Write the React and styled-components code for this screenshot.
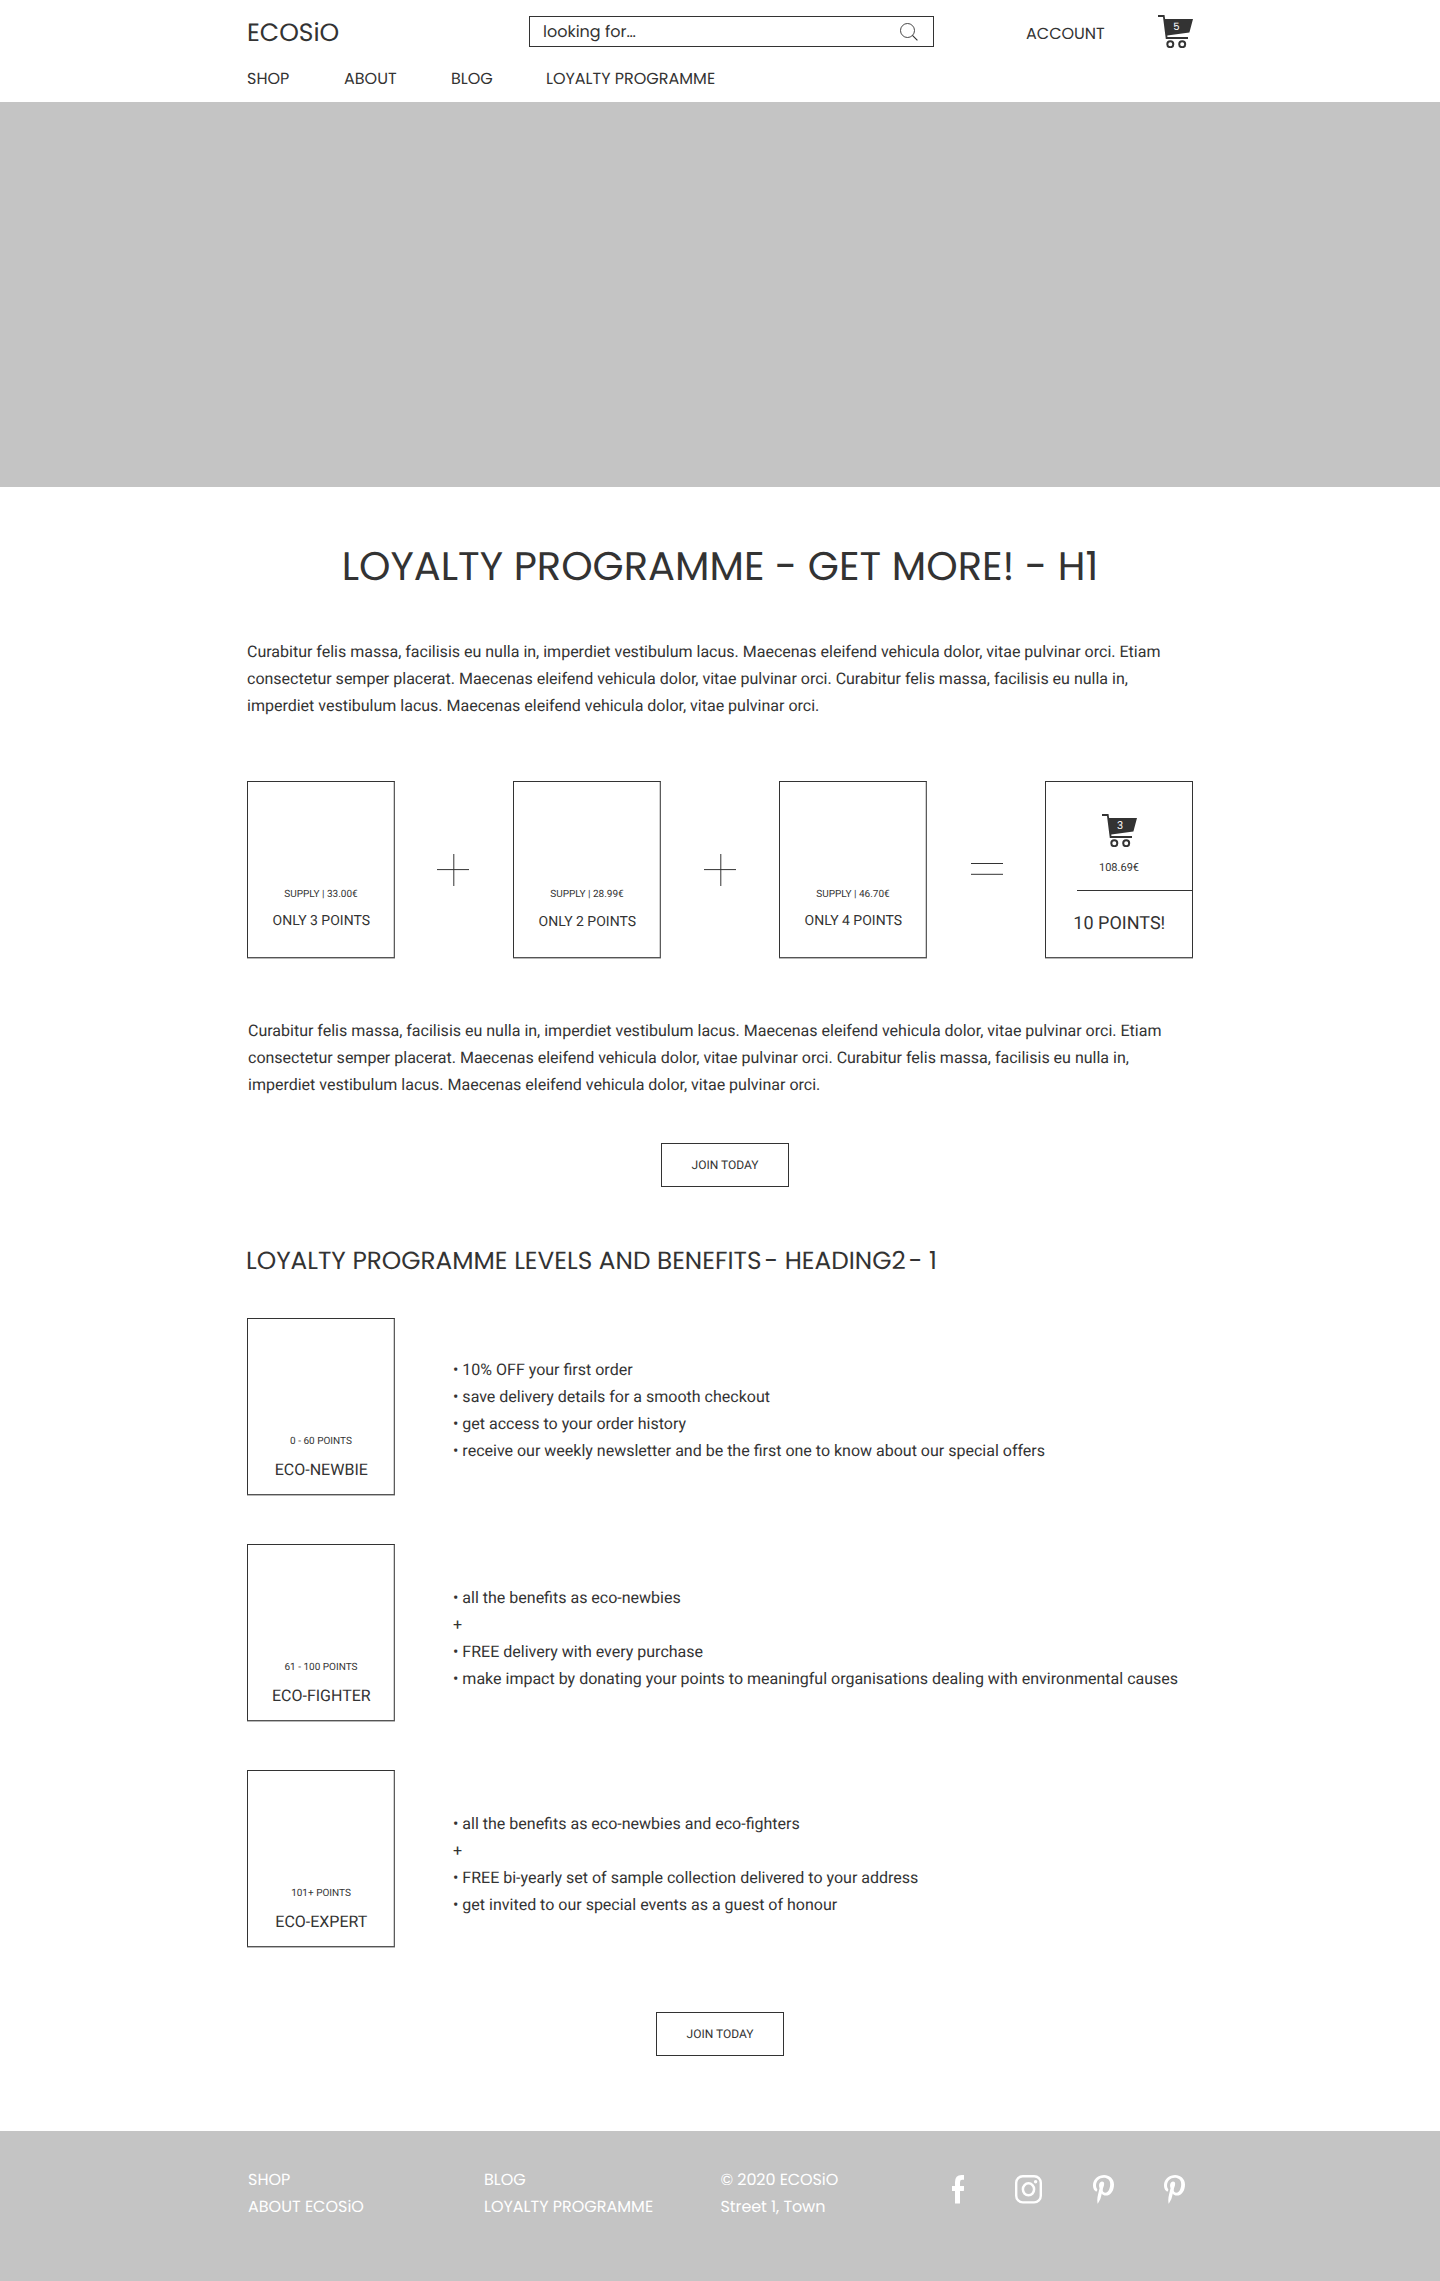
import React from "react";
import styled, { createGlobalStyle } from "styled-components";
import { FaPinterestP } from "react-icons/fa";

const ink = "#333333";
const grey = "#c4c4c4";
const display = `Poppins, Inter, "Liberation Sans", sans-serif`;
const body = `Roboto, "Liberation Sans", sans-serif`;

const GlobalStyle = createGlobalStyle`
  *, *::before, *::after { box-sizing: border-box; }
  body {
    margin: 0;
    background: #fff;
    color: ${ink};
    font-family: ${body};
    text-rendering: geometricPrecision;
  }
  h1, h2, p, ul { margin: 0; padding: 0; font-weight: 400; }
  ul { list-style: none; }
  a { color: inherit; text-decoration: none; }
  svg { display: block; flex: none; }
`;

const Page = styled.div`
  display: flex;
  flex-direction: column;
  width: 1440px;
  height: 2281px;
`;

const Container = styled.div`
  width: 946px;
  margin: 0 auto;
`;

/* Header */
const Header = styled.header`
  height: 102px;
  padding-top: 15px;
`;

const TopRow = styled.div`
  display: flex;
  align-items: flex-start;
  height: 33px;
`;

const Logo = styled.a`
  width: 282px;
  padding-top: 1px;
  font: 400 25px/33px ${display};
`;

const SearchBox = styled.div`
  display: flex;
  align-items: flex-start;
  justify-content: space-between;
  width: 405px;
  height: 31px;
  margin-top: 1px;
  padding: 0 15px 0 13px;
  border: 1px solid ${ink};
  font: 400 16px/29px ${display};

  svg { margin-top: 6px; }
`;

const AccountLink = styled.a`
  width: 132px;
  margin: 3px 0 0 92px;
  font: 400 16px/31px ${display};
`;

const Nav = styled.nav`
  display: grid;
  grid-template-columns: 97px 107px 95px auto;
  margin-top: 21px;
  font: 400 16px/20px ${display};
`;

const CartFrame = styled.span`
  position: relative;
  display: block;
  width: 35px;
  height: 33px;
`;

const CartCount = styled.span`
  position: absolute;
  top: 4px;
  left: 11px;
  width: 15px;
  text-align: center;
  color: #fff;
  font: 400 ${(p) => (p.$display ? 10 : 11)}px/15px ${(p) => (p.$display ? display : body)};
`;

const Hero = styled.div`
  height: 385px;
  background: ${grey};
`;

/* Content */
const Main = styled.main`
  flex: 1;
  padding-top: 54px;
`;

const PageTitle = styled.h1`
  text-align: center;
  font: 400 40px/50px ${display};
  white-space: nowrap;
`;

const SectionTitle = styled.h2`
  margin: 59px 0 43px -1px;
  font: 400 24.75px/29px ${display};
  white-space: nowrap;
`;

const TitleDash = styled.span`
  word-spacing: -3.6px;
`;

const Paragraph = styled.p`
  margin: ${(p) => p.$top}px 0 0 ${(p) => p.$left}px;
  font-size: 16px;
  line-height: 27px;
`;

const Equation = styled.div`
  display: flex;
  align-items: flex-start;
  margin: 62px 0 58px;
  height: 178px;
`;

const Card = styled.div`
  display: flex;
  flex: none;
  flex-direction: column;
  align-items: center;
  width: 148px;
  height: 177px;
  margin-bottom: 1px;
  padding-top: ${(p) => p.$top}px;
  border: 1px solid ${ink};
  border-bottom-color: #555;
  border-right-color: ${(p) => (p.$crisp ? ink : "#5c5c5c")};
  box-shadow: 0 1px 0 #b8b8b8${(p) => (p.$crisp ? "" : ", inset -1px 0 0 #d0d0d0")};
  white-space: nowrap;
`;

const CardNote = styled.span`
  font-size: ${(p) => p.$size || 10}px;
  line-height: 16px;
  margin-top: ${(p) => p.$gap || 0}px;
`;

const CardLabel = styled.span`
  margin-top: ${(p) => p.$gap}px;
  padding-left: 0.6px;
  font-size: ${(p) => p.$size}px;
  line-height: ${(p) => p.$line || 20}px;
`;

const CardRule = styled.span`
  align-self: flex-end;
  width: 115px;
  height: 1px;
  margin-top: 14px;
  background: ${ink};
`;

const Operator = styled.div`
  width: 118px;
  padding: 73px 0 0 ${(p) => p.$left}px;
`;

const JoinButton = styled.a`
  display: flex;
  align-items: center;
  justify-content: center;
  width: 128px;
  height: 44px;
  margin: ${(p) => p.$top}px 0 0 ${(p) => p.$left}px;
  border: 1px solid ${ink};
  font-size: 12px;
  line-height: 18px;
`;

const Levels = styled.div`
  display: flex;
  flex-direction: column;
  gap: 48px;
`;

const Level = styled.section`
  display: flex;
  align-items: flex-start;
  gap: 58px;
  height: 178px;
`;

const Benefits = styled.ul`
  margin-top: ${(p) => p.$top}px;
  font-size: 16px;
  line-height: 27px;
  white-space: nowrap;
`;

/* Footer */
const Footer = styled.footer`
  height: 150px;
  padding-top: 35px;
  background: ${grey};
  color: #fff;
`;

const FooterGrid = styled.div`
  display: grid;
  grid-template-columns: 236px 236.5px 231.5px auto;
  width: 946px;
  margin: 0 auto;
  padding-left: 1px;
`;

const FooterColumn = styled.div`
  display: flex;
  flex-direction: column;
  font: 400 16px/27px ${display};
  letter-spacing: ${(p) => p.$tracking || 0}px;
`;

const Social = styled.div`
  display: flex;
  gap: 50.6px;
  padding-top: 9px;
`;

const PinterestIcon = styled(FaPinterestP)`
  width: 21px;
  height: 28.5px;
`;

function Cart({ count, display: useDisplay }) {
  return (
    <CartFrame>
      <svg width="35" height="33" viewBox="0 0 35 33">
        <path fill={ink} d="M0 0H6.5L7.1 4H35L31.4 17.6L9.3 20.6L9.4 22H30V24H7.8L5 2H0Z" />
        <circle cx="12.3" cy="29.2" r="3" fill="none" stroke={ink} strokeWidth="2" />
        <circle cx="24.2" cy="29.2" r="3" fill="none" stroke={ink} strokeWidth="2" />
      </svg>
      <CartCount $display={useDisplay}>{count}</CartCount>
    </CartFrame>
  );
}

const SearchIcon = () => (
  <svg width="18" height="18" viewBox="0 0 18 18" fill="none" stroke={ink}>
    <circle cx="7.5" cy="7.5" r="7" strokeWidth="0.9" />
    <path d="M12.4 12.4L17.4 17.4" strokeWidth="1.1" />
  </svg>
);

const Plus = () => (
  <svg width="32" height="32" viewBox="0 0 32 32" stroke={ink}>
    <path d="M0 15.6H32M16.8 0V32" />
  </svg>
);

const Equals = () => (
  <svg width="32" height="32" viewBox="0 0 32 32" stroke={ink}>
    <path d="M0 9.5H32M0 20.3H32" />
  </svg>
);

const Facebook = () => (
  <svg width="12.4" height="29" viewBox="0 0 12.4 29" fill="#fff">
    <path d="M12.4 0V4.8H10.2Q8 4.8 8 7.2V11H12.3L11.8 16H8V28.6H3V16H0V11H3V7.2Q3 0 9.6 0Z" />
  </svg>
);

const Instagram = () => (
  <svg width="27" height="29" viewBox="0 0 27 29" fill="none" stroke="#fff">
    <rect x="1.2" y="1.2" width="24.6" height="26.2" rx="6.6" strokeWidth="2.4" />
    <ellipse cx="13.5" cy="14.3" rx="5.6" ry="6" strokeWidth="2.5" />
    <circle cx="20.6" cy="6.8" r="1.7" fill="#fff" stroke="none" />
  </svg>
);

const Pinterest = () => <PinterestIcon viewBox="0 6 384 500" preserveAspectRatio="none" />;

const lorem =
  "Curabitur felis massa, facilisis eu nulla in, imperdiet vestibulum lacus. Maecenas eleifend vehicula dolor, vitae pulvinar orci. Etiam consectetur semper placerat. Maecenas eleifend vehicula dolor, vitae pulvinar orci. Curabitur felis massa, facilisis eu nulla in, imperdiet vestibulum lacus. Maecenas eleifend vehicula dolor, vitae pulvinar orci.";

const levels = [
  {
    range: "0 - 60 POINTS",
    name: "ECO-NEWBIE",
    top: 38,
    benefits: [
      "• 10% OFF your first order",
      "• save delivery details for a smooth checkout",
      "• get access to your order history",
      "• receive our weekly newsletter and be the first one to know about our special offers",
    ],
  },
  {
    range: "61 - 100 POINTS",
    name: "ECO-FIGHTER",
    top: 40,
    benefits: [
      "• all the benefits as eco-newbies",
      "+",
      "• FREE delivery with every purchase",
      "• make impact by donating your points to meaningful organisations dealing with environmental causes",
    ],
  },
  {
    range: "101+ POINTS",
    name: "ECO-EXPERT",
    top: 40,
    benefits: [
      "• all the benefits as eco-newbies and eco-fighters",
      "+",
      "• FREE bi-yearly set of sample collection delivered to your address",
      "• get invited to our special events as a guest of honour",
    ],
  },
];

function SupplyCard({ price, points, gap = 8 }) {
  return (
    <Card $top={105}>
      <CardNote>SUPPLY | {price}€</CardNote>
      <CardLabel $gap={gap} $size={14}>ONLY {points} POINTS</CardLabel>
    </Card>
  );
}

export default function App() {
  return (
    <Page>
      <GlobalStyle />
      <Header>
        <Container>
          <TopRow>
            <Logo>ECOSiO</Logo>
            <SearchBox>
              <span>looking for…</span>
              <SearchIcon />
            </SearchBox>
            <AccountLink>ACCOUNT</AccountLink>
            <Cart count="5" display />
          </TopRow>
          <Nav>
            <a>SHOP</a>
            <a>ABOUT</a>
            <a>BLOG</a>
            <a>LOYALTY PROGRAMME</a>
          </Nav>
        </Container>
      </Header>
      <Hero />
      <Main>
        <Container>
          <PageTitle>LOYALTY PROGRAMME - GET MORE! - H1</PageTitle>
          <Paragraph $top={47} $left={0}>{lorem}</Paragraph>
          <Equation>
            <SupplyCard price="33.00" points={3} />
            <Operator $left={42}><Plus /></Operator>
            <SupplyCard price="28.99" points={2} gap={9} />
            <Operator $left={43}><Plus /></Operator>
            <SupplyCard price="46.70" points={4} />
            <Operator $left={44}><Equals /></Operator>
            <Card $top={32} $crisp>
              <Cart count="3" />
              <CardNote $size={11} $gap={13}>108.69€</CardNote>
              <CardRule />
              <CardLabel $gap={21} $size={18} $line={24}>10 POINTS!</CardLabel>
            </Card>
          </Equation>
          <Paragraph $top={0} $left={1}>{lorem}</Paragraph>
          <JoinButton $top={45} $left={414}>JOIN TODAY</JoinButton>
          <SectionTitle>
            LOYALTY PROGRAMME LEVELS AND BENEFITS
            <TitleDash> -</TitleDash> HEADING2
            <TitleDash> -</TitleDash> 1
          </SectionTitle>
          <Levels>
            {levels.map((level) => (
              <Level key={level.name}>
                <Card $top={115}>
                  <CardNote>{level.range}</CardNote>
                  <CardLabel $gap={10} $size={16}>{level.name}</CardLabel>
                </Card>
                <Benefits $top={level.top}>
                  {level.benefits.map((line) => (
                    <li key={line}>{line}</li>
                  ))}
                </Benefits>
              </Level>
            ))}
          </Levels>
          <JoinButton $top={64} $left={409}>JOIN TODAY</JoinButton>
        </Container>
      </Main>
      <Footer>
        <FooterGrid>
          <FooterColumn>
            <a>SHOP</a>
            <a>ABOUT ECOSiO</a>
          </FooterColumn>
          <FooterColumn>
            <a>BLOG</a>
            <a>LOYALTY PROGRAMME</a>
          </FooterColumn>
          <FooterColumn $tracking={-0.08}>
            <span>© 2020 ECOSiO</span>
            <span>Street 1, Town</span>
          </FooterColumn>
          <Social>
            <Facebook />
            <Instagram />
            <Pinterest />
            <Pinterest />
          </Social>
        </FooterGrid>
      </Footer>
    </Page>
  );
}
